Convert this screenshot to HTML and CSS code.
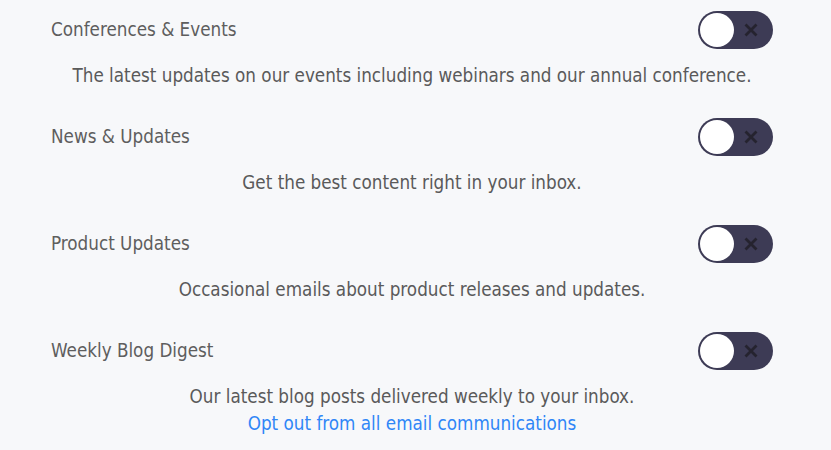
FILE: index.html
```html
<!DOCTYPE html>
<html lang="en">
<head>
    <meta charset="UTF-8">
    <title>Email Preferences</title>
    <link rel="stylesheet" href="styles.css">
</head>
<body>
    <!-- Subscription list -->
    <div id="prefs">
        <div class="pref">
            <div class="pref-head">
                <span class="pref-title">Conferences &amp; Events</span>
                <span class="toggle"><span class="knob"></span><svg class="cross" viewBox="0 0 14 14"><path d="M1.5 1.5 L12.5 12.5 M12.5 1.5 L1.5 12.5"/></svg></span>
            </div>
            <p class="pref-desc">The latest updates on our events including webinars and our annual conference.</p>
        </div>

        <div class="pref">
            <div class="pref-head">
                <span class="pref-title">News &amp; Updates</span>
                <span class="toggle"><span class="knob"></span><svg class="cross" viewBox="0 0 14 14"><path d="M1.5 1.5 L12.5 12.5 M12.5 1.5 L1.5 12.5"/></svg></span>
            </div>
            <p class="pref-desc">Get the best content right in your inbox.</p>
        </div>

        <div class="pref">
            <div class="pref-head">
                <span class="pref-title">Product Updates</span>
                <span class="toggle"><span class="knob"></span><svg class="cross" viewBox="0 0 14 14"><path d="M1.5 1.5 L12.5 12.5 M12.5 1.5 L1.5 12.5"/></svg></span>
            </div>
            <p class="pref-desc">Occasional emails about product releases and updates.</p>
        </div>

        <div class="pref last">
            <div class="pref-head">
                <span class="pref-title">Weekly Blog Digest</span>
                <span class="toggle"><span class="knob"></span><svg class="cross" viewBox="0 0 14 14"><path d="M1.5 1.5 L12.5 12.5 M12.5 1.5 L1.5 12.5"/></svg></span>
            </div>
            <p class="pref-desc">Our latest blog posts delivered weekly to your inbox.</p>
        </div>

        <a class="opt-out" href="#">Opt out from all email communications</a>
    </div>
</body>
</html>
```

FILE: styles.css
```css
/* General Body Styling */
body {
    margin: 0;
    padding: 0;
    background-color: #f7f8fa;
    font-family: 'DejaVu Sans Condensed', 'DejaVu Sans', sans-serif;
    color: #5a5a5a;
}

/* Container */
#prefs {
    width: 722px;
    margin: 0 0 0 51px;
    padding-top: 11px;
    text-align: center;
}

/* Preference rows */
.pref {
    margin-bottom: 31px;
}

.pref.last {
    margin-bottom: 0;
}

.pref-head {
    display: flex;
    justify-content: space-between;
    align-items: center;
    height: 38px;
}

.pref-title {
    font-size: 18.7px;
    line-height: 22px;
    color: #5e5e5e;
}

.pref-desc {
    margin: 16px 0 0 0;
    font-size: 18.7px;
    line-height: 22px;
    color: #5a5a5a;
}

/* Toggle switch */
.toggle {
    position: relative;
    display: flex;
    align-items: center;
    justify-content: flex-end;
    width: 75px;
    height: 38px;
    box-sizing: border-box;
    padding-right: 15px;
    border-radius: 19px;
    background-color: #3d3b55;
}

.knob {
    position: absolute;
    left: 2px;
    top: 2px;
    width: 34px;
    height: 34px;
    border-radius: 50%;
    background-color: #fff;
}

.cross {
    width: 14px;
    height: 14px;
    stroke: #25232f;
    stroke-width: 2.8;
    fill: none;
}

/* Opt out link */
.opt-out {
    display: block;
    width: fit-content;
    margin: 5px auto 0 auto;
    font-size: 18.7px;
    line-height: 22px;
    color: #2f86f7;
    text-decoration: none;
}
```
